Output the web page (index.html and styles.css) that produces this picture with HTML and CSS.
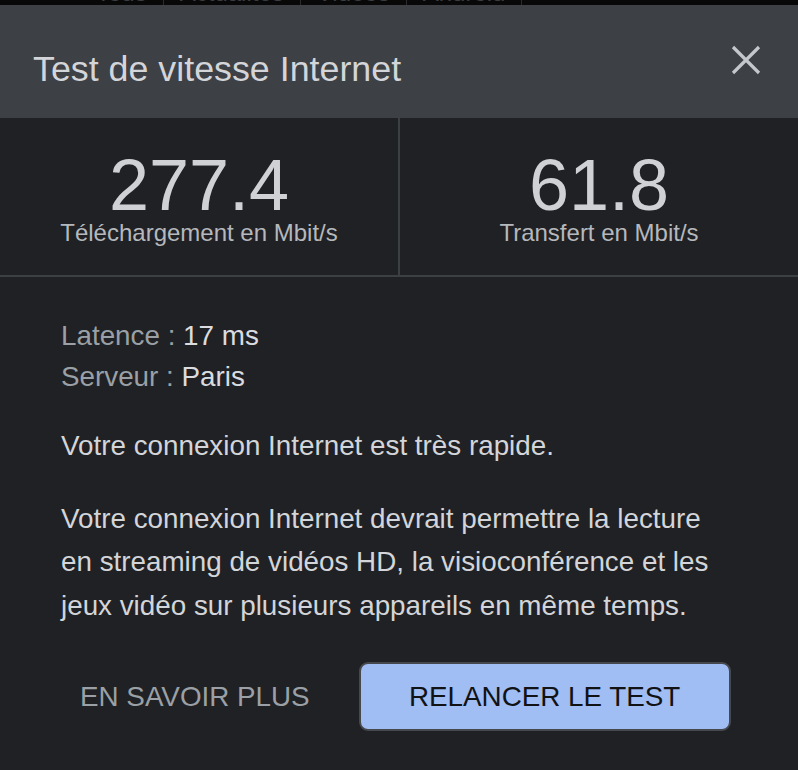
FILE: index.html
```html
<!DOCTYPE html>
<html lang="fr">
<head>
    <meta charset="UTF-8">
    <meta name="viewport" content="width=device-width, initial-scale=1.0">
    <title>Test de vitesse Internet</title>
    <link rel="stylesheet" href="styles.css">
</head>
<body>

<div class="topbar">
    <nav class="topbar-nav">
        <span>Tous</span>
        <span class="sep"></span>
        <span>Actualités</span>
        <span class="sep"></span>
        <span>Vidéos</span>
        <span class="sep"></span>
        <span>Android</span>
        <span class="sep"></span>
    </nav>
</div>

<section class="dialog">
    <header class="dialog-head">
        <h1>Test de vitesse Internet</h1>
        <button class="close-button" aria-label="Fermer">
            <svg viewBox="0 0 40 40" width="40" height="40">
                <path d="M7 7 L33 33 M33 7 L7 33" stroke="#c4c7cc" stroke-width="3.2" fill="none"/>
            </svg>
        </button>
    </header>

    <div class="stats">
        <div class="stat">
            <div class="stat-value">277.4</div>
            <div class="stat-unit">Téléchargement en Mbit/s</div>
        </div>
        <div class="stat">
            <div class="stat-value">61.8</div>
            <div class="stat-unit">Transfert en Mbit/s</div>
        </div>
    </div>

    <div class="details">
        <div class="info">
            <div><span class="info-label">Latence :</span> 17 ms</div>
            <div><span class="info-label">Serveur :</span> Paris</div>
        </div>
        <p class="summary">Votre connexion Internet est très rapide.</p>
        <p class="summary long">Votre connexion Internet devrait permettre la lecture en streaming de vidéos HD, la visioconférence et les jeux vidéo sur plusieurs appareils en même temps.</p>
    </div>

    <div class="actions">
        <button class="text-button">EN SAVOIR PLUS</button>
        <button class="main-button">RELANCER LE TEST</button>
    </div>
</section>

</body>
</html>
```

FILE: styles.css
```css
body {
    font-family: 'Liberation Sans', Arial, sans-serif;
    background-color: #202124;
    color: #d3d5d9;
    margin: 0;
    padding: 0;
}

/* Bit of the page behind the dialog */
.topbar {
    height: 5px;
    overflow: hidden;
    background-color: #080808;
}

.topbar-nav {
    display: flex;
    align-items: center;
    gap: 16px;
    margin-top: -19px;
    padding-left: 96px;
    font-size: 24px;
    line-height: 24px;
    color: #3a3c40;
}

.topbar-nav .sep {
    width: 1px;
    height: 24px;
    background-color: #2a2b2e;
}

.dialog-head {
    display: flex;
    justify-content: space-between;
    align-items: flex-start;
    height: 113px;
    padding: 0 32px 0 33px;
    background-color: #3d4044;
}

.dialog-head h1 {
    margin: 44px 0 0;
    font-size: 35.8px;
    line-height: 40px;
    font-weight: normal;
    color: #d3d5d9;
}

.close-button {
    width: 40px;
    height: 40px;
    margin-top: 35px;
    padding: 0;
    border: none;
    background: none;
    cursor: pointer;
}

.close-button svg {
    display: block;
}

/* Speed numbers */
.stats {
    display: flex;
    height: 157px;
    border-bottom: 2px solid #3c4043;
}

.stat {
    flex: 1;
    display: flex;
    flex-direction: column;
    align-items: center;
    padding-top: 33px;
}

.stat:first-child {
    border-right: 2px solid #3c4043;
}

.stat-value {
    font-size: 72px;
    line-height: 68px;
    color: #cfd1d5;
}

.stat-unit {
    font-size: 24px;
    line-height: 28px;
    color: #b5b8bc;
}

/* Text block */
.details {
    padding: 38px 64px 0 61px;
    font-size: 27.8px;
}

.info {
    line-height: 41px;
    color: #dadce0;
}

.info-label {
    color: #9aa0a6;
}

.summary {
    margin: 27px 0 0;
    line-height: 43.5px;
    color: #d3d5d9;
}

.summary.long {
    margin-top: 29px;
}

.actions {
    display: flex;
    align-items: center;
    gap: 30px;
    padding: 35px 0 0 61px;
}

.text-button {
    padding: 0 19px;
    border: none;
    background: none;
    font-family: inherit;
    font-size: 27.8px;
    color: #9aa0a6;
    cursor: pointer;
}

.main-button {
    width: 372px;
    height: 69px;
    box-sizing: border-box;
    border: 2px solid #45484d;
    border-radius: 9px;
    background-color: #a0bdf4;
    font-family: inherit;
    font-size: 27.8px;
    color: #111214;
    cursor: pointer;
}
```
